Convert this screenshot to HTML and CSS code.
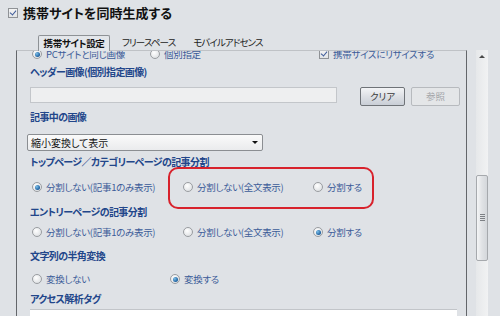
FILE: index.html
```html
<!DOCTYPE html>
<html lang="ja">
<head>
    <meta charset="UTF-8">
    <title>携帯サイト設定</title>
    <link rel="stylesheet" href="styles.css">
</head>
<body>
    <div class="head">
        <span class="check on"></span>
        <div class="title">携帯サイトを同時生成する</div>
    </div>

    <div class="tabs">
        <div class="tab active">携帯サイト設定</div>
        <div class="tab">フリースペース</div>
        <div class="tab">モバイルアドセンス</div>
    </div>

    <div class="main">
        <div class="panel">
            <div class="content">
                <div class="row first">
                    <label class="opt w118"><span class="radio on"></span>PCサイトと同じ画像</label>
                    <label class="opt w169"><span class="radio"></span>個別指定</label>
                    <label class="opt"><span class="check on"></span>携帯サイズにリサイズする</label>
                </div>

                <div class="label l-header">ヘッダー画像(個別指定画像)</div>
                <div class="filerow">
                    <div class="input"></div>
                    <div class="btn">クリア</div>
                    <div class="btn disabled">参照</div>
                </div>

                <div class="label l-image">記事中の画像</div>
                <div class="select">縮小変換して表示<span class="drop"></span></div>

                <div class="label l-top">トップページ／カテゴリーページの記事分割</div>
                <div class="row r-top">
                    <label class="opt w151"><span class="radio on"></span>分割しない(記事1のみ表示)</label>
                    <label class="opt w130"><span class="radio"></span>分割しない(全文表示)</label>
                    <label class="opt"><span class="radio"></span>分割する</label>
                </div>

                <div class="label l-entry">エントリーページの記事分割</div>
                <div class="row r-entry">
                    <label class="opt w151"><span class="radio"></span>分割しない(記事1のみ表示)</label>
                    <label class="opt w130"><span class="radio"></span>分割しない(全文表示)</label>
                    <label class="opt"><span class="radio on"></span>分割する</label>
                </div>

                <div class="label l-half">文字列の半角変換</div>
                <div class="row r-half">
                    <label class="opt w138"><span class="radio"></span>変換しない</label>
                    <label class="opt"><span class="radio on"></span>変換する</label>
                </div>

                <div class="label l-tag">アクセス解析タグ</div>
                <div class="textarea"></div>
            </div>
            <div class="mark"></div>
        </div>

        <div class="scrollbar">
            <div class="arrow"></div>
            <div class="thumb"><span class="grip"></span></div>
        </div>
    </div>
</body>
</html>
```

FILE: styles.css
```css
body {
    margin: 0;
    width: 500px;
    height: 316px;
    overflow: hidden;
    background: #dfe2e6;
    font-family: "Noto Sans CJK JP", "Noto Sans", sans-serif;
    font-feature-settings: "palt";
    color: #2d4f8e;
}

/* header */
.head {
    display: flex;
    align-items: center;
    height: 25px;
    padding-left: 8px;
}

.title {
    margin-left: 5px;
    font-size: 13px;
    font-weight: bold;
    color: #111;
    line-height: 25px;
}

.check {
    display: inline-block;
    box-sizing: border-box;
    width: 10px;
    height: 10px;
    border: 1px solid #8f9296;
    background: linear-gradient(#f4f4f4, #e2e4e6);
    position: relative;
    flex: none;
}

.check.on::after {
    content: "";
    position: absolute;
    left: 2px;
    top: 0px;
    width: 3px;
    height: 5px;
    border-right: 1.6px solid #3f5c9a;
    border-bottom: 1.6px solid #3f5c9a;
    transform: rotate(40deg);
}

/* tabs */
.tabs {
    display: flex;
    margin-top: 10px;
    margin-left: 38px;
    height: 16px;
    position: relative;
    z-index: 1;
}

.tab {
    padding: 0 9px;
    font-size: 9.5px;
    letter-spacing: -0.9px;
    line-height: 15px;
    color: #222;
}

.tab.active {
    box-sizing: border-box;
    width: 72px;
    padding: 0;
    margin-right: 3px;
    letter-spacing: -0.4px;
    text-align: center;
    font-weight: bold;
    color: #111;
    border: 1px solid #8e9296;
    border-bottom: none;
    border-radius: 2px 2px 0 0;
    background: #e3e6ea;
}

/* panel */
.main {
    display: flex;
    margin-top: -1px;
    padding-left: 16px;
}

.panel {
    position: relative;
    box-sizing: border-box;
    width: 451px;
    height: 267px;
    border-left: 1px solid #63666a;
    border-right: 1px solid #63666a;
    border-top: 1px solid #bfc2c6;
    overflow: hidden;
}

.content {
    padding-left: 13px;
    margin-top: -4px;
}

.label {
    height: 14px;
    line-height: 14px;
    font-size: 10px;
    letter-spacing: -0.6px;
    font-weight: bold;
    color: #22468a;
}

.row {
    display: flex;
    align-items: center;
    height: 14px;
    padding-left: 2px;
}

.opt {
    display: flex;
    align-items: center;
    flex: none;
    font-size: 9.5px;
    letter-spacing: -0.3px;
    color: #3b5b98;
    white-space: nowrap;
}

.opt .radio,
.opt .check {
    margin-right: 4px;
}

.w118 { width: 118px; }
.w169 { width: 169px; }
.w151 { width: 151px; }
.w130 { width: 130px; }
.w138 { width: 138px; }

.first { height: 14px; }

.radio {
    display: inline-block;
    box-sizing: border-box;
    width: 10px;
    height: 10px;
    border-radius: 50%;
    border: 1px solid #9a9da1;
    background: radial-gradient(circle at 40% 35%, #ffffff, #d6d9dc);
    position: relative;
    flex: none;
}

.radio.on::after {
    content: "";
    position: absolute;
    left: 1.5px;
    top: 1.5px;
    width: 5px;
    height: 5px;
    border-radius: 50%;
    background: radial-gradient(circle at 35% 35%, #7cc0ea, #1d5f9e 70%);
}

.l-header { margin-top: 4px; }
.l-image { margin-top: 4px; }
.l-top { margin-top: 4px; }
.r-top { margin-top: 11px; }
.l-entry { margin-top: 11px; }
.r-entry { margin-top: 6px; }
.l-half { margin-top: 10px; }
.r-half { margin-top: 9px; }
.l-tag { margin-top: 6px; }

/* header image row */
.filerow {
    display: flex;
    margin-top: 8px;
    height: 19px;
}

.input {
    box-sizing: border-box;
    width: 307px;
    height: 16px;
    border: 1px solid #c3c6ca;
    background: #eeeff0;
}

.btn {
    box-sizing: border-box;
    width: 45px;
    height: 19px;
    margin-left: 23px;
    border: 1px solid #6f7378;
    border-radius: 2px;
    background: linear-gradient(#f3f4f6, #dde0e5 50%, #c9ced6);
    font-size: 9.5px;
    line-height: 17px;
    text-align: center;
    color: #3a3a3a;
}

.btn.disabled {
    width: 49px;
    margin-left: 6px;
    border-color: #b7babe;
    background: #e4e6e8;
    color: #a3a5a8;
}

/* select */
.select {
    position: relative;
    box-sizing: border-box;
    width: 236px;
    height: 17px;
    margin-top: 10px;
    margin-left: -3px;
    padding-left: 3px;
    border: 1px solid #8b8e92;
    border-radius: 2px;
    background: linear-gradient(#fafafa, #eaebed);
    font-size: 10px;
    line-height: 15px;
    color: #111;
}

.drop {
    position: absolute;
    right: 4px;
    top: 6px;
    width: 0;
    height: 0;
    border-left: 3px solid transparent;
    border-right: 3px solid transparent;
    border-top: 3px solid #111;
}

.textarea {
    width: 427px;
    height: 20px;
    margin-top: 3px;
    border-top: 1px solid #c2c5c9;
    background: #fff;
}

/* highlight */
.mark {
    position: absolute;
    left: 151px;
    top: 116px;
    width: 202px;
    height: 38px;
    border: 2px solid #d8222c;
    border-radius: 10px;
}

/* scrollbar */
.scrollbar {
    position: relative;
    width: 12px;
    height: 267px;
    margin-left: 9px;
    background: linear-gradient(90deg, #e6e8ea, #f1f2f3);
}

.arrow {
    position: absolute;
    left: 3px;
    top: 5px;
    width: 0;
    height: 0;
    border-left: 3px solid transparent;
    border-right: 3px solid transparent;
    border-bottom: 3px solid #4a4a4a;
}

.thumb {
    position: absolute;
    left: 0;
    top: 125px;
    box-sizing: border-box;
    width: 12px;
    height: 86px;
    border: 1px solid #a6a9ad;
    border-radius: 2px;
    background: linear-gradient(90deg, #f4f5f6, #e0e2e5 50%, #d4d7db);
}

.grip {
    position: absolute;
    left: 3px;
    top: 38px;
    width: 5px;
    height: 7px;
    background: repeating-linear-gradient(#7d8085 0 1px, transparent 1px 2px);
}
```
